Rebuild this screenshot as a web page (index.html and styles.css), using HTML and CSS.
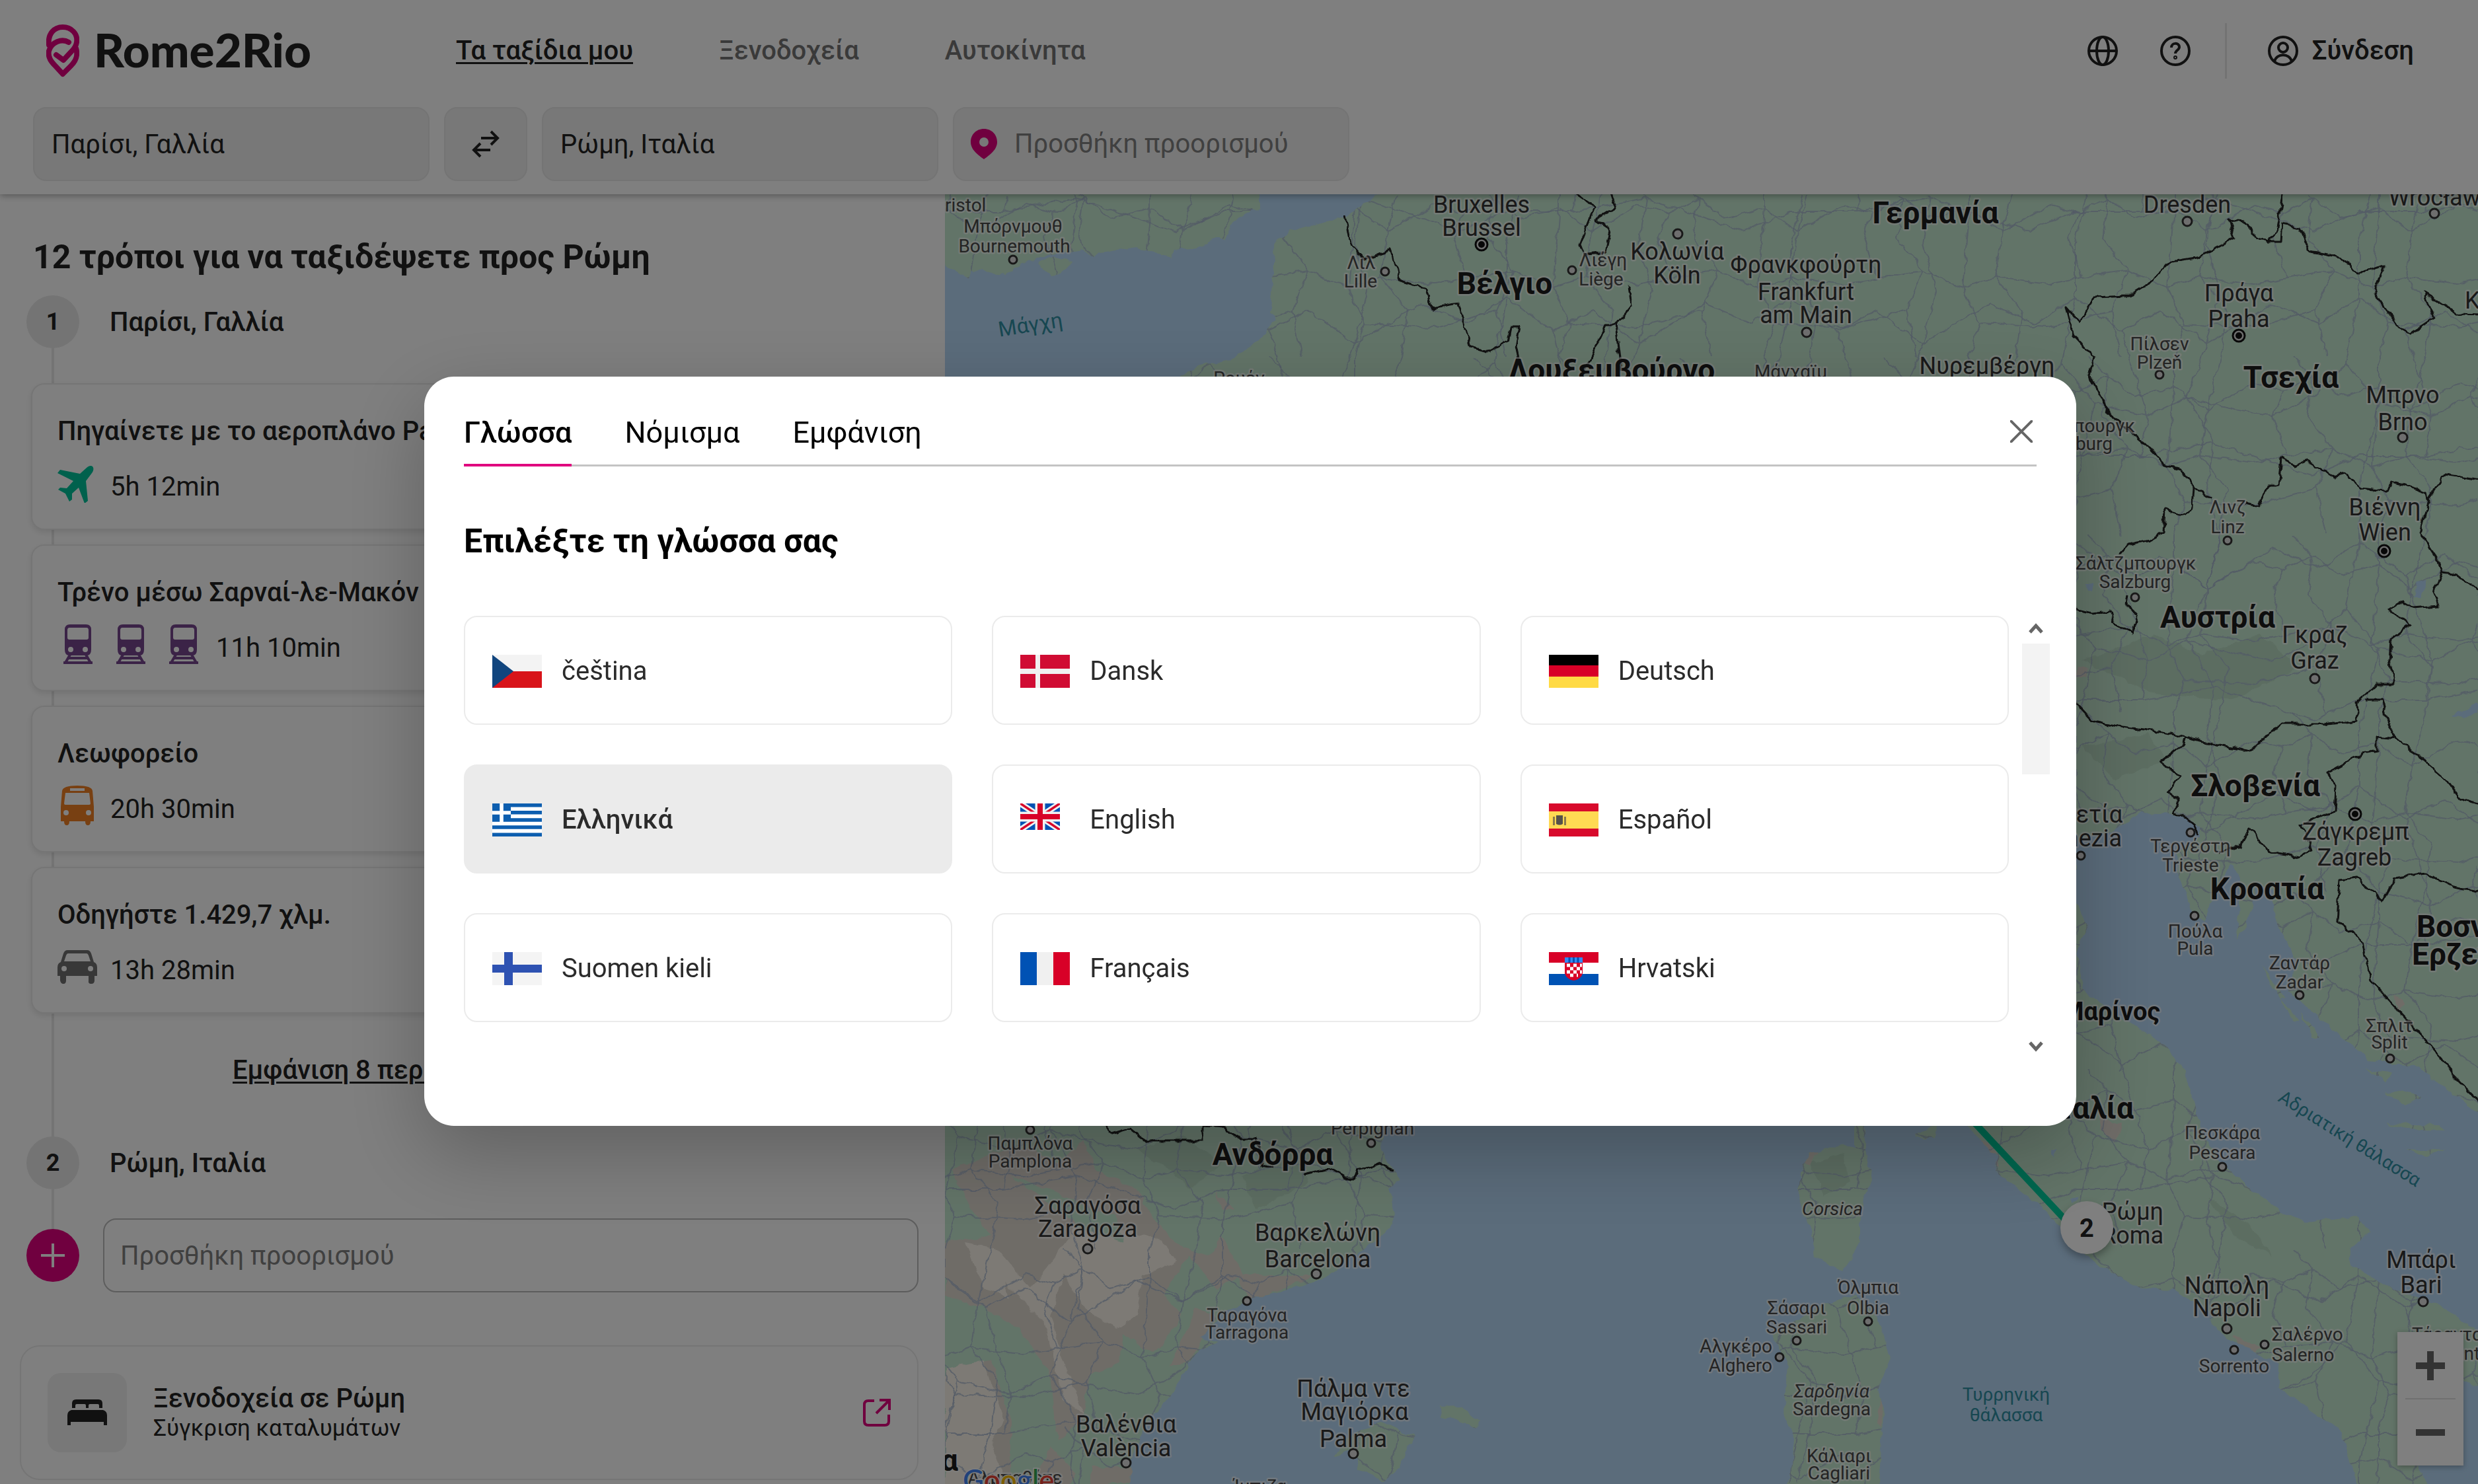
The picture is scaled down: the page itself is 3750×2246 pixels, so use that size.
FILE: index.html
```html
<!DOCTYPE html>
<html lang="el">
<head>
<meta charset="utf-8">
<title>Rome2Rio</title>
<link rel="stylesheet" href="styles.css">
</head>
<body>
<header class="header">
  <div class="topbar">
    <a class="logo" href="#">
      <svg class="logo-mark" viewBox="0 0 50 80" fill="none" stroke="#e0007e" stroke-width="8" stroke-linejoin="round" stroke-linecap="round"><path d="M4 31C2 14 12 4 25 4S48 14 46 27Q45 34 38 41L26 54 15 46"/><path d="M34 27C24 21 8 26 4 40C2 50 8 57 14 63L25 75 37 63C46 54 48 46 45 36"/></svg>
      <span class="logo-text">Rome2Rio</span>
    </a>
    <nav class="nav">
      <a class="nav-link current" href="#">Τα ταξίδια μου</a>
      <a class="nav-link" href="#">Ξενοδοχεία</a>
      <a class="nav-link" href="#">Αυτοκίνητα</a>
    </nav>
    <div class="tools">
      <button class="icon-btn" aria-label="Γλώσσα"><svg viewBox="0 0 46 46" fill="none" stroke="#222" stroke-width="4"><circle cx="23" cy="23" r="21"/><ellipse cx="23" cy="23" rx="9" ry="21"/><path d="M2 23H44"/></svg></button>
      <button class="icon-btn" aria-label="Βοήθεια"><svg viewBox="0 0 46 46" fill="none" stroke="#222" stroke-width="4"><circle cx="23" cy="23" r="21"/><path d="M17 18c0-8 12-8 12-1 0 5-6 5-6 10"/><circle cx="23" cy="33" r="1"/></svg></button>
      <span class="rule"></span>
      <button class="login"><svg viewBox="0 0 46 46" fill="none" stroke="#222" stroke-width="4"><circle cx="23" cy="23" r="21"/><circle cx="23" cy="18" r="7"/><path d="M10 39c3-13 23-13 26 0"/></svg>Σύνδεση</button>
    </div>
  </div>
  <form class="search">
    <input class="field" aria-label="Από" value="Παρίσι, Γαλλία">
    <button class="field swap" type="button" aria-label="Αντιστροφή"><svg viewBox="0 0 42 42" fill="none" stroke="#222" stroke-width="4"><path d="M14 12H39M29 2l10 10-10 10M28 30H3M13 20L3 30l10 10"/></svg></button>
    <input class="field" aria-label="Προς" value="Ρώμη, Ιταλία">
    <label class="field with-pin">
      <svg viewBox="0 0 42 46"><path fill="#e0007e" fill-rule="evenodd" d="M21 0C9 0 1 9 1 20c0 12 12 20 20 26 8-6 20-14 20-26C41 9 33 0 21 0zm0 13a7 7 0 1 1 0 14 7 7 0 0 1 0-14z"/></svg>
      <input aria-label="Προσθήκη προορισμού" placeholder="Προσθήκη προορισμού">
    </label>
  </form>
</header>

<main class="main">
  <section class="sidebar">
    <h1>12 τρόποι για να ταξιδέψετε προς Ρώμη</h1>
    <div class="timeline">
      <div class="stop"><span class="dot">1</span><strong>Παρίσι, Γαλλία</strong></div>
      <div class="routes">
        <article class="route"><h3>Πηγαίνετε με το αεροπλάνο Paris Orly</h3>
          <div class="legs"><svg viewBox="0 0 60 60"><path fill="#00c29a" d="M53 5c-2-2-6-1-9 2L34 16 4 10 0 15l24 12-10 11-10-1-3 3 11 6 6 12 4-3v-9l10-9 9 24 5-4-3-30 9-12c3-4 3-8 1-10z"/></svg><span>5h 12min</span></div></article>
        <article class="route"><h3>Τρένο μέσω Σαρναί-λε-Μακόν</h3>
          <div class="legs">
            <svg viewBox="0 0 60 60"><g id="train"><path fill="#76468e" fill-rule="evenodd" d="M19 0h24q8 0 8 8v30q0 9-7 9H18q-7 0-7-9V8q0-8 8-8zm-1 5q-3 0-3 4v11q0 3 3 3h26q3 0 3-3V9q0-4-3-4z"/><circle cx="20" cy="38" r="4" fill="#fff"/><circle cx="42" cy="38" r="4" fill="#fff"/><path fill="none" stroke="#76468e" stroke-width="4" d="M19 46L12 58M43 46l7 12M17 51h28M9 58h44"/></g></svg>
            <svg viewBox="0 0 60 60"><use href="#train"/></svg>
            <svg viewBox="0 0 60 60"><use href="#train"/></svg><span>11h 10min</span></div></article>
        <article class="route"><h3>Λεωφορείο</h3>
          <div class="legs"><svg viewBox="0 0 60 60"><path fill="#f08024" fill-rule="evenodd" d="M7 8q1-8 23-8t23 8l2 24v22h-5q0 6-4 6t-4-6H18q0 6-4 6t-4-6H5V32zm5 3l-2 16q0 2 2 2h36q2 0 2-2l-2-16zm7-7v4h22V4z"/><circle cx="13" cy="41" r="4" fill="#fff"/><circle cx="47" cy="41" r="4" fill="#fff"/></svg><span>20h 30min</span></div></article>
        <article class="route"><h3>Οδηγήστε 1.429,7 χλμ.</h3>
          <div class="legs"><svg viewBox="0 0 60 60"><path fill="#707070" fill-rule="evenodd" d="M15 5h30q4 0 6 5l4 13q5 2 5 8v13h-4v7q0 5-5 5t-4-5v-7H13v7q0 5-4 5t-5-5v-7H0V31q0-6 5-8L9 10q2-5 6-5zm1 5q-2 0-3 3l-3 9h40l-3-9q-1-3-3-3z"/><circle cx="10" cy="33" r="4" fill="#fff"/><circle cx="50" cy="33" r="4" fill="#fff"/></svg><span>13h 28min</span></div></article>
      </div>
      <a class="more" href="#">Εμφάνιση 8 περισσότερων διαδρομών</a>
      <div class="stop"><span class="dot">2</span><strong>Ρώμη, Ιταλία</strong></div>
      <div class="add">
        <button class="dot plus" aria-label="Προσθήκη"><svg viewBox="0 0 36 36" stroke="#fff" stroke-width="4"><path d="M18 0V36M0 18H36"/></svg></button>
        <input aria-label="Προσθήκη προορισμού" placeholder="Προσθήκη προορισμού">
      </div>
    </div>
    <a class="hotel" href="#">
      <span class="hotel-icon"><svg viewBox="0 0 60 40"><path fill="#222" d="M7 13V6q0-6 6-6h34q6 0 6 6v7h-5V9q0-2-2-2H34q-2 0-2 2v4h-4V9q0-2-2-2H14q-2 0-2 2v4zM6 16h48q6 2 6 8v15h-5v-5H5v5H0V24q0-6 6-8z"/></svg></span>
      <span class="hotel-text"><strong>Ξενοδοχεία σε Ρώμη</strong><small>Σύγκριση καταλυμάτων</small></span>
      <svg class="ext" viewBox="0 0 42 42" fill="none" stroke="#e0007e" stroke-width="4"><path d="M17 3H8Q2 3 2 9v25q0 6 6 6h25q6 0 6-6V24M25 2H40V17M39 3L20 22"/></svg>
    </a>
  </section>

  <section class="map" aria-label="Χάρτης">
    <svg class="map-art" viewBox="1430 294 2320 1952" preserveAspectRatio="xMidYMid slice">
      <defs>
        <filter id="rough" x="0" y="0" width="100%" height="100%"><feTurbulence type="fractalNoise" baseFrequency="0.06" numOctaves="2" seed="4"/><feDisplacementMap in="SourceGraphic" scale="11" xChannelSelector="R" yChannelSelector="G"/></filter>
        <pattern id="roadsA" width="310" height="270" patternUnits="userSpaceOnUse"><path class="road" d="M0 40L45 52 90 30 130 60 190 45 240 80 310 40M60 0L90 30 82 90 120 140 95 200 110 270M0 160L50 150 120 140 180 165 230 150 310 160M190 45L180 165 205 220 190 270M190 0V45M240 80L230 150 270 200 260 270M260 0L240 80M95 200L0 225M205 220L310 225M50 150L30 90 45 52"/></pattern>
        <pattern id="roadsB" width="430" height="370" patternUnits="userSpaceOnUse"><path class="road" d="M0 90L70 120 130 80 200 130 260 100 330 150 430 90M130 0L130 80 110 180 160 240 130 370M330 0L350 70 330 150 300 230 340 300 330 370M0 260L60 230 110 180M160 240L240 260 300 230 370 250 430 260M200 130L240 260 230 320M0 330L60 350 130 320 230 320 340 300 430 330"/></pattern>
        <path id="land" d="M1400 260H1905V315L1868 335 1855 362 1838 362 1812 375 1778 378 1773 389 1720 374 1664 383 1656 390 1640 378 1590 385 1545 400 1523 416 1470 408 1466 423 1400 380ZM1572 400L1590 388 1622 398 1605 415 1590 417ZM2105 260L2088 294 2055 315 2035 330 1985 340 1950 350 1927 370 1928 400 1923 470 1930 485 1905 515 1860 545 1820 552 1780 572 1500 700 1400 1000V2280H1714L1710 2212 1729 2167 1767 2117 1790 2079 1813 2044 1844 2032 1817 2024 1855 1984 1897 1965 1997 1939 2058 1893 2088 1874 2111 1840 2102 1798 2120 1787 2102 1760 2090 1741 2092 1700 2400 1600 2900 1600 2978 1704 3022 1752 3018 1771 3090 1828 3138 1880 3181 1919 3241 1950 3289 1952 3341 1985 3353 2011 3400 2042 3448 2066 3448 2100 3496 2135 3544 2166 3576 2280H3690L3640 2180 3650 2110 3728 2090 3780 2110V2030L3750 2018 3695 1976 3624 1952 3560 1916 3556 1890 3588 1862 3568 1842 3492 1850 3456 1838 3420 1809 3365 1766 3329 1709 3321 1666 3301 1614 3277 1583 3193 1528 3153 1500 3143 1440 3160 1400 3142 1370 3142 1270 3200 1258 3240 1230 3290 1232 3330 1250 3330 1268 3293 1290 3295 1320 3310 1360 3320 1390 3335 1395 3345 1370 3370 1320 3375 1305 3390 1330 3385 1420 3400 1400 3415 1340 3440 1345 3445 1400 3475 1450 3464 1500 3528 1557 3560 1581 3584 1605 3656 1614 3780 1705V260ZM2807 1700H2823V1738L2833 1785 2815 1833V1880L2788 1926 2747 1900 2739 1862 2723 1814V1776L2739 1747 2779 1733 2807 1738ZM2807 1959L2843 1995 2859 2057 2843 2104 2851 2133 2839 2280H2703L2715 2180 2699 2133 2707 2071 2683 2019 2755 1976ZM2898 1716L2930 1706 2928 1722 2900 1722ZM2058 2167L2092 2152 2138 2174 2119 2220 2094 2241 2058 2224 2050 2190 2018 2204 2030 2185ZM2180 2129L2211 2128 2238 2152 2234 2163 2207 2148 2181 2145ZM3612 1655L3640 1650 3662 1660 3640 1672ZM3610 1635L3580 1618 3620 1625ZM3610 1700L3690 1702 3700 1710 3640 1708ZM3640 1738L3700 1742 3670 1750ZM3450 1510L3480 1545 3470 1545ZM3480 1530L3512 1570 3500 1570ZM3420 1460L3460 1510 3450 1512Z"/>
        <clipPath id="landClip"><use href="#land"/></clipPath>
      </defs>
      <g filter="url(#rough)">
        <use href="#land" fill="#c5e8d0"/>
        <g clip-path="url(#landClip)">
          <path fill="#ded8cf" d="M1440 1770L1500 1745 1560 1740 1600 1760 1640 1725 1660 1770 1720 1800 1750 1850 1790 1890 1830 1900 1850 1870 1880 1930 1840 1950 1800 1900 1760 1960 1790 1990 1750 2050 1700 2020 1690 2100 1660 2080 1640 2150 1600 2180 1590 2080 1540 2010 1490 1980 1430 1960V1880L1500 1870 1470 1830ZM1810 1980L1840 1990 1800 2060 1770 2070ZM1870 1930L1990 1930 1890 1970ZM1430 2080L1500 2060 1530 2150 1530 2246H1430ZM1590 2190L1630 2230 1620 2246H1560ZM1650 2220H1715V2246H1650ZM1840 1805L1868 1830 1850 1830Z"/>
          <path fill="#faf5ea" d="M1460 1880L1510 1890 1560 1950 1620 1870 1640 1830 1700 1860 1760 1880 1780 1910 1730 1930 1720 1990 1690 2010 1650 1990 1610 1930 1590 1990 1610 2060 1640 2140 1610 2120 1580 2000 1520 1940 1530 1965 1490 1950ZM1430 2070L1490 2060 1520 2150 1500 2180 1520 2246H1430Z"/>
          <path fill="#c5e8d0" d="M1530 1780L1590 1800 1650 1830 1690 1840 1700 1880 1640 1860ZM1650 2080L1760 2040V2120L1700 2180 1630 2190Z"/>
          <path fill="#b4d4be" opacity=".7" d="M1720 1740L1790 1720 1850 1760 1800 1800 1770 1770ZM1880 1780L1960 1740 1980 1790 1900 1830ZM3150 1000L3260 960 3330 990 3420 960 3480 1010 3380 1060 3260 1050ZM3150 1130L3250 1110 3280 1150 3200 1180ZM2740 1760L2790 1745 2800 1790 2760 1810ZM3340 1810L3400 1850 3440 1900 3380 1870Z"/>
          <path fill="#ded8cf" d="M3145 1008L3160 1012 3155 1028 3142 1024ZM3175 1680L3195 1700 3210 1700 3200 1730 3180 1710ZM2990 1720L3010 1760 3025 1765 3015 1735ZM3380 2020L3420 2040 3410 2050 3390 2040ZM3625 1505L3640 1520 3630 1530ZM2850 2090L2848 2160 2842 2150ZM2725 1760L2755 1735 2740 1765Z"/>
          <rect x="1430" y="294" width="2320" height="1952" fill="url(#roadsA)"/>
          <rect x="1430" y="294" width="2320" height="1952" fill="url(#roadsB)"/>
          <path fill="#b6d8f6" d="M3652 905L3660 882 3672 880 3662 905ZM3710 1083L3750 1062V1076L3730 1088ZM3155 885L3170 882 3168 894ZM3100 1740L3112 1738 3110 1752ZM3132 1812L3144 1812 3138 1822Z"/>
        </g>
        <g class="border">
          <path d="M2035 326L2043 370 2063 392 2103 379 2119 425 2159 437 2167 466 2206 459 2226 525 2254 533 2282 518 2286 496 2300 496 2294 522 2302 560M2378 290L2412 314 2390 370 2396 385 2430 381 2437 348 2414 333 2445 314 2437 290M2465 433L2469 462 2445 492 2430 492 2398 560M2445 492L2453 560"/>
          <path d="M3456 290L3445 350 3432 366 3452 366 3454 339 3480 344 3496 381 3544 390 3568 414 3608 403 3592 444 3632 496 3648 505 3684 481 3668 442 3719 474 3760 475M3432 366L3409 355 3401 337 3373 333 3381 361 3325 390 3285 396 3269 411 3249 431 3221 448 3169 450 3147 488 3126 464 3138 507 3169 540 3162 570 3183 611 3199 633 3249 675 3278 704 3299 710 3320 735 3345 755M3398 763L3419 767 3432 735 3448 735 3452 694 3473 705 3490 697 3531 721 3548 716 3573 739 3610 743 3620 730 3672 745 3674 758 3701 718 3760 727"/>
          <path d="M3674 758L3662 806 3689 847 3695 866 3682 892 3691 917 3651 920 3635 911 3616 924 3647 946 3618 968 3616 1000 3624 1035 3597 1035 3566 1064 3568 1090 3515 1096 3452 1096 3436 1109 3405 1137 3357 1128 3307 1115 3266 1107 3204 1099 3166 1090 3138 1060M3695 866L3718 869 3760 902M3579 1061L3604 1061 3614 1096 3626 1118 3664 1147 3701 1179 3722 1208 3760 1219M3626 1118L3597 1115 3597 1137 3575 1141 3523 1169 3535 1192 3533 1227 3481 1249 3498 1287 3477 1297 3432 1287 3405 1255 3390 1281 3357 1291M3307 1115L3303 1128 3270 1153 3299 1176 3280 1198 3297 1211 3291 1230 3320 1246 3327 1265"/>
          <path d="M3320 735L3318 771 3307 780 3276 771 3274 806 3253 818 3220 825 3208 838M3220 901L3218 917 3235 930 3226 959 3202 943 3191 924 3166 927 3138 920M3760 1350L3713 1342 3672 1322 3626 1329 3606 1364 3568 1329 3541 1332 3537 1393 3573 1421 3589 1485 3643 1543 3695 1602 3711 1628 3760 1675"/>
          <path d="M1665 1695L1683 1715 1710 1707 1736 1728 1821 1728 1821 1705 1851 1707 1878 1724 1901 1724 1912 1764 1925 1768M1974 1779L2012 1770 2035 1783 2050 1783 2054 1772 2088 1762 2107 1770"/>
        </g>
      </g>
      <path d="M2970 1680L3157 1880" stroke="#00ce9e" stroke-width="10"/>
      <g class="town">
        <circle cx="1533" cy="393" r="6"/><circle cx="2096" cy="411" r="6"/><circle cx="2379" cy="409" r="6"/><circle cx="2539" cy="354" r="7"/><circle cx="3310" cy="335" r="7"/><circle cx="3684" cy="323" r="7"/><circle cx="2734" cy="503" r="7"/><circle cx="3268" cy="567" r="6"/><circle cx="3636" cy="662" r="7"/><circle cx="3371" cy="818" r="6"/><circle cx="3231" cy="904" r="6"/><circle cx="3503" cy="1027" r="7"/><circle cx="3149" cy="1295" r="6"/><circle cx="3315" cy="1260" r="6"/><circle cx="3321" cy="1386" r="6"/><circle cx="3480" cy="1506" r="6"/><circle cx="3617" cy="1602" r="6"/><circle cx="3363" cy="1766" r="6"/><circle cx="2827" cy="2000" r="6"/><circle cx="2719" cy="2029" r="6"/><circle cx="2693" cy="2054" r="6"/><circle cx="3370" cy="2011" r="7"/><circle cx="3667" cy="1970" r="7"/><circle cx="3427" cy="2035" r="6"/><circle cx="3381" cy="2043" r="6"/><circle cx="1559" cy="1710" r="6"/><circle cx="2075" cy="1730" r="6"/><circle cx="1646" cy="1890" r="7"/><circle cx="1992" cy="1928" r="7"/><circle cx="1887" cy="1969" r="6"/><circle cx="2048" cy="2200" r="7"/><circle cx="1704" cy="2214" r="7"/>
      </g>
      <g class="capital"><circle cx="2242" cy="370" r="9"/><circle cx="3388" cy="508" r="9"/><circle cx="3608" cy="834" r="9"/><circle cx="3564" cy="1232" r="9"/></g>
      <g class="capital-dot"><circle cx="2242" cy="370" r="5"/><circle cx="3388" cy="508" r="5"/><circle cx="3608" cy="834" r="5"/><circle cx="3564" cy="1232" r="5"/></g>
      <g class="label small">
        <text class="start" x="1430" y="320">ristol</text>
        <text x="1533" y="352">Μπόρνμουθ</text><text x="1535" y="382">Bournemouth</text>
        <text x="2060" y="407">Λιλ</text><text x="2059" y="435">Lille</text>
        <text x="2426" y="403">Λιέγη</text><text x="2423" y="432">Liège</text>
        <text x="1875" y="582">Ρουέν</text><text x="2710" y="572">Μάνχαϊμ</text>
        <text x="3268" y="530">Πίλσεν</text><text x="3268" y="558">Plzeň</text>
        <text class="end" x="3231" y="654">Ρέγκενσμπουργκ</text><text class="end" x="3197" y="681">Regensburg</text>
        <text x="3371" y="777">Λινζ</text><text x="3371" y="807">Linz</text>
        <text x="3232" y="862">Σάλτζμπουργκ</text><text x="3231" y="890">Salzburg</text>
        <text x="3315" y="1290">Τεργέστη</text><text x="3315" y="1319">Trieste</text>
        <text x="3322" y="1419">Πούλα</text><text x="3322" y="1445">Pula</text>
        <text x="3480" y="1467">Ζαντάρ</text><text x="3480" y="1496">Zadar</text>
        <text x="3616" y="1562">Σπλιτ</text><text x="3616" y="1587">Split</text>
        <text x="3363" y="1724">Πεσκάρα</text><text x="3363" y="1754">Pescara</text>
        <text x="2827" y="1958">Όλμπια</text><text x="2827" y="1989">Olbia</text>
        <text x="2719" y="1989">Σάσαρι</text><text x="2719" y="2018">Sassari</text>
        <text class="end" x="2682" y="2047">Αλγκέρο</text><text class="end" x="2682" y="2076">Alghero</text>
        <text class="italic" x="2773" y="1839">Corsica</text><text class="italic" x="2772" y="2115">Σαρδηνία</text><text x="2772" y="2142">Sardegna</text>
        <text x="2783" y="2213">Κάλιαρι</text><text x="2783" y="2239">Cagliari</text>
        <text class="start" x="3438" y="2029">Σαλέρνο</text><text class="start" x="3438" y="2060">Salerno</text>
        <text x="3381" y="2077">Sorrento</text><text class="start" x="3650" y="2029">Τάραντας</text><text class="start" x="3674" y="2058">Taranto</text>
        <text x="1559" y="1740">Παμπλόνα</text><text x="1559" y="1767">Pamplona</text><text x="2077" y="1717">Perpignan</text>
        <text x="1887" y="2000">Ταραγόνα</text><text x="1887" y="2026">Tarragona</text>
        <text x="1907" y="2259">Ίμπιζα</text><text x="1536" y="2246">Αλμπαθέτε</text>
      </g>
      <g class="label medium">
        <text x="2242" y="322">Bruxelles</text><text x="2242" y="357">Brussel</text>
        <text x="2538" y="393">Κολωνία</text><text x="2538" y="429">Köln</text>
        <text x="3310" y="322">Dresden</text><text x="3684" y="311">Wrocław</text>
        <text x="2733" y="413">Φρανκφούρτη</text><text x="2733" y="454">Frankfurt</text><text x="2733" y="489">am Main</text>
        <text x="3388" y="456">Πράγα</text><text x="3388" y="495">Praha</text>
        <text x="3007" y="566">Νυρεμβέργη</text><text class="start" x="3730" y="467">Κρακοβία</text>
        <text x="3636" y="610">Μπρνο</text><text x="3636" y="651">Brno</text>
        <text x="3609" y="780">Βιέννη</text><text x="3609" y="818">Wien</text>
        <text x="3503" y="973">Γκραζ</text><text x="3503" y="1012">Graz</text>
        <text x="3565" y="1271">Ζάγκρεμπ</text><text x="3563" y="1310">Zagreb</text>
        <text class="end" x="3212" y="1245">Βενετία</text><text class="end" x="3211" y="1281">Venezia</text>
        <text class="end" x="3274" y="1846">Ρώμη</text><text class="end" x="3274" y="1882">Roma</text>
        <text x="3370" y="1958">Νάπολη</text><text x="3370" y="1992">Napoli</text>
        <text x="3664" y="1919">Μπάρι</text><text x="3664" y="1957">Bari</text>
        <text x="1646" y="1837">Σαραγόσα</text><text x="1646" y="1872">Zaragoza</text>
        <text x="1994" y="1878">Βαρκελώνη</text><text x="1994" y="1918">Barcelona</text>
        <text x="2048" y="2114">Πάλμα ντε</text><text x="2050" y="2149">Μαγιόρκα</text><text x="2048" y="2190">Palma</text>
        <text x="1704" y="2168">Βαλένθια</text><text x="1704" y="2204">València</text>
      </g>
      <g class="label country">
        <text x="2277" y="445">Βέλγιο</text><text x="2439" y="576">Λουξεμβούργο</text><text x="2929" y="338">Γερμανία</text>
        <text x="3467" y="587">Τσεχία</text><text x="3356" y="950">Αυστρία</text><text x="3413" y="1205">Σλοβενία</text><text x="3431" y="1361">Κροατία</text>
        <text class="start" x="3657" y="1418">Βοσνία και</text><text class="start" x="3650" y="1460">Ερζεγοβίνη</text>
        <text class="end state" x="3269" y="1544">Άγιος Μαρίνος</text><text class="end" x="3229" y="1693">Ιταλία</text>
        <text x="1926" y="1763">Ανδόρρα</text><text class="end" x="1450" y="2226">Ισπανία</text>
      </g>
      <g class="label sea">
        <text x="3036" y="2120">Τυρρηνική</text><text x="3036" y="2151">θάλασσα</text>
        <text class="channel" x="1561" y="502" transform="rotate(-9 1561 502)">Μάγχη</text>
        <text x="3551" y="1731" transform="rotate(32 3551 1731)">Αδριατική θάλασσα</text>
      </g>
      <circle class="stop-pin" cx="3158" cy="1858" r="40"/>
      <text class="stop-no" x="3158" y="1872">2</text>
      <text class="google" x="1457" y="2256"><tspan fill="#4285f4">G</tspan><tspan fill="#ea4335">o</tspan><tspan fill="#fbbc04">o</tspan><tspan fill="#4285f4">g</tspan><tspan fill="#34a853">l</tspan><tspan fill="#ea4335">e</tspan></text>
    </svg>
    <div class="zoom">
      <button aria-label="Μεγέθυνση"><svg viewBox="0 0 44 44" stroke="#666" stroke-width="10"><path d="M22 0V44M0 22H44"/></svg></button>
      <button aria-label="Σμίκρυνση"><svg viewBox="0 0 44 44" stroke="#666" stroke-width="10"><path d="M0 22H44"/></svg></button>
    </div>
  </section>
</main>

<div class="overlay">
  <section class="modal" role="dialog" aria-modal="true" aria-labelledby="modal-title">
    <div class="tabs" role="tablist">
      <button class="tab active" role="tab">Γλώσσα</button>
      <button class="tab" role="tab">Νόμισμα</button>
      <button class="tab" role="tab">Εμφάνιση</button>
      <button class="close" aria-label="Κλείσιμο"><svg viewBox="0 0 34 34" stroke="#666" stroke-width="4"><path d="M0 0L34 34M34 0L0 34"/></svg></button>
    </div>
    <h2 id="modal-title">Επιλέξτε τη γλώσσα σας</h2>
    <div class="scroller">
      <div class="langs">
        <button class="lang"><svg class="flag" viewBox="0 0 75 50"><path fill="#f3f3f3" d="M0 0H75V25H0z"/><path fill="#d8141a" d="M0 25H75V50H0z"/><path fill="#11457e" d="M0 0L32 25 0 50z"/></svg>čeština</button>
        <button class="lang"><svg class="flag" viewBox="0 0 75 50"><path fill="#d00c33" d="M0 0H75V50H0z"/><path fill="#f0f0f0" d="M23 0h7V50h-7zM0 21H75v8H0z"/></svg>Dansk</button>
        <button class="lang"><svg class="flag" viewBox="0 0 75 50"><path d="M0 0H75V17H0z"/><path fill="#d80027" d="M0 16H75V34H0z"/><path fill="#ffda44" d="M0 33H75V50H0z"/></svg>Deutsch</button>
        <button class="lang selected"><svg class="flag" viewBox="0 0 75 50"><path fill="#0d5eaf" d="M0 0H75V50H0z"/><path stroke="#fff" stroke-width="5.6" d="M28 8.3H75M28 19.4H75M0 30.5H75M0 41.6H75M14 0V28M0 14H28"/></svg>Ελληνικά</button>
        <button class="lang"><svg class="flag uk" viewBox="0 0 60 40"><path fill="#0052b4" d="M0 0H60V40H0z"/><path stroke="#f0f0f0" stroke-width="9" d="M0 0L60 40M60 0L0 40"/><path stroke="#d80027" stroke-width="3.5" d="M0 0L60 40M60 0L0 40"/><path stroke="#f0f0f0" stroke-width="15" d="M30 0V40M0 20H60"/><path stroke="#d80027" stroke-width="8" d="M30 0V40M0 20H60"/></svg>English</button>
        <button class="lang"><svg class="flag" viewBox="0 0 75 50"><path fill="#d80a2c" d="M0 0H75V50H0z"/><path fill="#ffda53" d="M0 12H75V38H0z"/><path fill="#55524a" d="M11 18h10v13q-5 3-10 0z"/><path stroke="#8a7a4a" stroke-width="3" d="M7.5 20V33M24.500 20V33"/></svg>Español</button>
        <button class="lang"><svg class="flag" viewBox="0 0 75 50"><path fill="#f4f4f4" d="M0 0H75V50H0z"/><path fill="#2e52b2" d="M18 0h13V50H18zM0 19H75V31H0z"/></svg>Suomen kieli</button>
        <button class="lang"><svg class="flag" viewBox="0 0 75 50"><path fill="#f0f0f0" d="M0 0H75V50H0z"/><path fill="#0052b4" d="M0 0H25V50H0z"/><path fill="#d80027" d="M50 0H75V50H50z"/></svg>Français</button>
        <button class="lang"><svg class="flag" viewBox="0 0 75 50"><path fill="#fff" d="M0 0H75V50H0z"/><path fill="#d80027" d="M0 0H75V16H0z"/><path fill="#0052b4" d="M0 33H75V50H0z"/><path fill="#d80027" d="M24 15H51V32q-2 9-13.500 11Q26 41 24 32z"/><path fill="#338af3" d="M24 8H51V16H24z"/><path stroke="#0052b4" stroke-width="3" d="M31 8v8M37.500 8v8M44 8v8"/><path stroke="#fff" stroke-width="5" stroke-dasharray="5 5" d="M27 20H50M27 30H50"/><path stroke="#fff" stroke-width="5" stroke-dasharray="5 5" d="M32 25H50M32 35H44"/></svg>Hrvatski</button>
      </div>
      <div class="scrollbar">
        <svg viewBox="0 0 22 17" fill="none" stroke="#666" stroke-width="5"><path d="M2 14L11 4l9 10"/></svg>
        <span class="thumb"></span>
        <svg viewBox="0 0 22 17" fill="none" stroke="#666" stroke-width="5"><path d="M2 3l9 10 9-10"/></svg>
      </div>
    </div>
  </section>
</div>
</body>
</html>
```
FILE: styles.css
```css
* { box-sizing: border-box; }
body {
  margin: 0;
  height: 100vh;
  display: flex;
  flex-direction: column;
  overflow: hidden;
  background: #fff;
  color: #222;
  font: 400 40px/48px Roboto, "Noto Sans", sans-serif;
}
h1, h2, h3 { margin: 0; }
strong { font-weight: 500; }
svg { display: block; flex: none; }
a { color: inherit; text-decoration: none; }
button, input { font: inherit; color: inherit; border: 0; padding: 0; margin: 0; background: none; outline: 0; }
input::placeholder { color: #808080; opacity: 1; }

/* Header */
.header { position: relative; z-index: 1; padding-bottom: 20px; background: #fff; box-shadow: 0 2px 10px rgba(0, 0, 0, .35); }
.topbar { display: flex; align-items: center; height: 154px; margin-bottom: 8px; padding: 0 97px 0 70px; }
.logo { display: flex; align-items: center; gap: 22px; width: 400px; }
.logo-mark { width: 50px; height: 80px; }
.logo-text { padding-bottom: 5px; font: 900 71px/75px Lato, sans-serif; }
.nav { display: flex; gap: 130px; margin-left: 220px; font-weight: 500; }
.nav-link { color: #757575; }
.nav-link.current { color: #222; text-decoration: underline; text-decoration-thickness: 3px; text-underline-offset: 4px; }
.tools { display: flex; align-items: center; margin-left: auto; }
.tools svg { width: 46px; height: 46px; }
.icon-btn { margin-right: 64px; }
.rule { width: 3px; height: 84px; margin-left: -12px; background: #e6e6e6; }
.login { display: flex; align-items: center; gap: 21px; margin-left: 62px; font-weight: 500; }
.search { display: flex; gap: 22px; padding: 0 50px; }
.field { width: 600px; height: 112px; padding: 0 26px; background: #f0f0f0; border: 2px solid #e8e8e8; border-radius: 20px; }
.swap { width: 126px; display: flex; align-items: center; justify-content: center; }
.swap svg { width: 42px; height: 42px; }
.with-pin { display: flex; align-items: center; gap: 25px; padding: 0 24px; }
.with-pin svg { width: 42px; height: 46px; }
.with-pin input { flex: 1; min-width: 0; }

/* Sidebar */
.main { display: flex; flex: 1; min-height: 0; }
.sidebar { position: relative; z-index: 0; flex: none; width: 1430px; padding: 65px 40px 0; overflow: hidden; }
h1 { margin: 0 0 28px 10px; font-size: 50px; line-height: 60px; font-weight: 700; }
.timeline { position: relative; }
.timeline::before { content: ""; position: absolute; z-index: -1; top: 40px; bottom: 60px; left: 38px; width: 4px; background: #e8e8e8; }
.stop { display: flex; align-items: center; gap: 46px; }
.stop strong { padding-top: 2px; }
.dot { display: flex; align-items: center; justify-content: center; flex: none; width: 80px; height: 80px; border-radius: 50%; background: #e8e8e8; font-size: 36px; font-weight: 700; }
.routes { display: grid; gap: 22px; margin: 53px 0 62px 7px; }
.route { padding: 47px 38px 39px; background: #fff; border: 2px solid #ebebeb; border-radius: 20px; box-shadow: 0 4px 10px rgba(0, 0, 0, .1); }
.route h3 { font-size: 40px; font-weight: 500; margin-bottom: 24px; }
.legs { display: flex; align-items: flex-end; gap: 20px; }
.legs svg { width: 60px; height: 60px; }
.more { display: block; margin: 0 0 76px 312px; font-weight: 500; text-decoration: underline; text-decoration-thickness: 3px; text-underline-offset: 4px; }
.add { display: flex; align-items: center; gap: 36px; margin-top: 44px; }
.plus { background: #e0007e; }
.plus svg { width: 36px; height: 36px; }
.add input { flex: 1; height: 112px; padding: 0 24px; background: #fff; border: 2px solid #bbb; border-radius: 20px; }
.hotel { display: flex; align-items: center; gap: 40px; height: 204px; margin: 80px 0 0 -10px; padding: 0 40px; border: 2px solid #ebebeb; border-radius: 30px; }
.hotel-icon { display: flex; align-items: center; justify-content: center; width: 120px; height: 120px; border-radius: 20px; background: #f0f0f0; }
.hotel-icon svg { width: 60px; height: 40px; }
.hotel-text { display: grid; }
.hotel-text small { font-size: 35px; line-height: 42px; }
.ext { width: 42px; height: 42px; margin-left: auto; }

/* Map */
.map { position: relative; flex: 1; min-width: 0; overflow: hidden; background: #b6d8f6; }
.map-art { width: 100%; height: 100%; }
.road { fill: none; stroke: #a4b4cc; stroke-width: 2; opacity: .75; }
.border { fill: none; stroke: #222; stroke-width: 3; stroke-linejoin: round; }
.town { fill: #ddd; stroke: #333; stroke-width: 3; }
.capital { fill: #ddd; stroke: #111; stroke-width: 3; }
.capital-dot { fill: #111; }
.label { text-anchor: middle; paint-order: stroke; stroke: rgba(255, 255, 255, .6); stroke-width: 5px; stroke-linejoin: round; }
.small { font-size: 28px; fill: #484848; }
.medium { font-size: 36px; fill: #333; }
.country { font-size: 46px; font-weight: 700; fill: #1c1c1c; }
.state { font-size: 38px; }
.sea { font-size: 28px; fill: #2f8fa3; stroke: none; }
.channel { font-size: 32px; }
.italic { font-style: italic; }
.start { text-anchor: start; }
.end { text-anchor: end; }
.stop-pin { fill: #fff; filter: drop-shadow(0 6px 6px rgba(0, 0, 0, .3)); }
.stop-no { font-size: 38px; font-weight: 700; text-anchor: middle; fill: #222; }
.google { font: 500 44px Lato, sans-serif; stroke: #fff; stroke-width: 3px; paint-order: stroke; }
.zoom { position: absolute; right: 22px; bottom: 28px; width: 100px; background: #fff; box-shadow: 0 2px 8px rgba(0, 0, 0, .3); }
.zoom button { display: flex; align-items: center; justify-content: center; width: 100px; height: 101px; }
.zoom button + button::before { content: ""; position: absolute; top: 100px; left: 12px; right: 12px; height: 2px; background: #e0e0e0; }
.zoom svg { width: 44px; height: 44px; }

/* Language dialog */
.overlay { position: fixed; inset: 0; z-index: 10; display: grid; place-items: center; padding: 28px 0 0 34px; background: rgba(0, 0, 0, .5); }
.modal { width: 2500px; max-width: 95%; padding: 55px 60px 101px; color: #000; background: #fff; border-radius: 45px; box-shadow: 0 40px 120px rgba(0, 0, 0, .25); }
.tabs { display: flex; gap: 80px; border-bottom: 3px solid #c4c4c4; }
.tab { margin-bottom: -3px; padding-bottom: 17px; border-bottom: 4px solid transparent; font-size: 45px; line-height: 60px; }
.tab.active { font-weight: 500; border-color: #e0007e; }
.close { display: flex; align-items: flex-start; margin-left: auto; padding: 11px 6px 0 0; }
.close svg { width: 34px; height: 34px; }
h2 { margin: 83px 0; font-size: 50px; line-height: 60px; font-weight: 700; }
.scroller { display: flex; height: 671px; margin-right: -20px; gap: 20px; }
.langs { flex: 1; display: grid; grid-template-columns: repeat(3, 1fr); align-content: start; gap: 60px; }
.lang { display: flex; align-items: center; gap: 30px; height: 165px; padding: 2px 0 0 41px; border: 2px solid #ebebeb; border-radius: 20px; color: #2b2b2b; }
.lang.selected { background: #ebebeb; font-weight: 500; }
.flag { width: 75px; height: 50px; }
.flag.uk { width: 60px; height: 40px; margin: 0 15px 10px 0; }
.scrollbar { display: flex; flex-direction: column; align-items: center; width: 42px; padding: 11px 0; }
.scrollbar svg { width: 22px; height: 17px; }
.thumb { width: 42px; height: 198px; margin: 14px 0 auto; background: #f3f3f3; }
```
